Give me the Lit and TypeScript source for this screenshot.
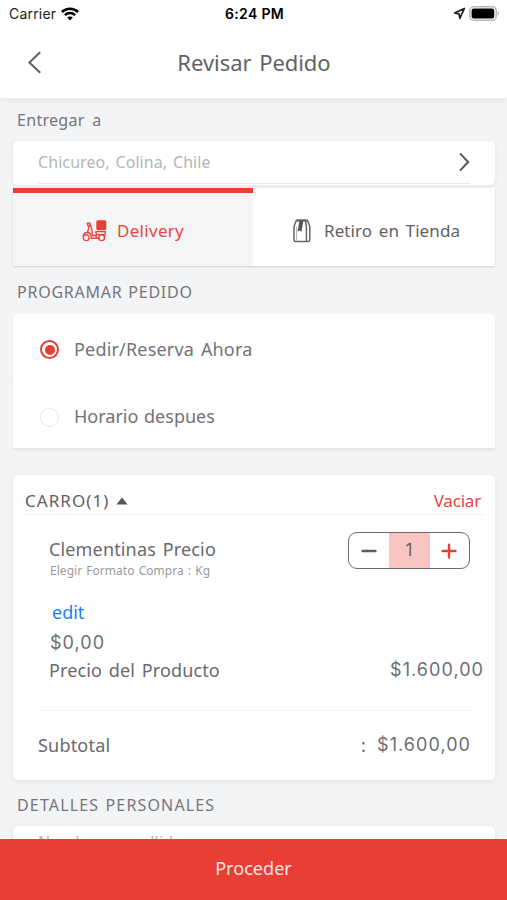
import { LitElement, html, css, svg } from "lit";
import { customElement, state, property } from "lit/decorators.js";
import { classMap } from "lit/directives/class-map.js";

const wifi = svg`<svg class="ico" width="18" height="14" viewBox="0 0 18 14" fill="none" stroke="#000" stroke-width="2.5">
  <path d="M.9 5C5.3.6 12.7.6 17.1 5"/><path d="M3.9 8.2c2.9-2.8 7.3-2.8 10.2 0"/>
  <path d="M6.2 10.6c1.6-1.5 4-1.5 5.6 0L9 13.5z" fill="#000" stroke="none"/></svg>`;

const locationArrow = svg`<svg class="ico" width="13" height="13" viewBox="0 0 13 13" fill="none" stroke="#222" stroke-width="1.7" stroke-linejoin="round">
  <path d="M11.4 1.4 1.6 6l4.4.8.8 4.6z"/></svg>`;

const battery = svg`<svg class="ico" width="31" height="15" viewBox="0 0 31 15">
  <rect x=".8" y=".8" width="26.4" height="13.4" rx="4" fill="#fff" stroke="#b9b9b9" stroke-width="1.6"/>
  <rect x="2.6" y="2.6" width="22.6" height="9.8" rx="2.2" fill="#000"/>
  <path d="M28.7 5.3c1.6.5 1.6 3.9 0 4.4z" fill="#b0b0b0"/></svg>`;

const scooter = svg`<svg class="ico" width="26" height="22" viewBox="0 0 26 22" fill="none" stroke="#e8463d" stroke-width="1.4" stroke-linejoin="round" stroke-linecap="round">
  <rect x="15" y="1" width="8.6" height="8.6" rx="1" fill="#e83e33" stroke="#e83e33"/>
  <path d="M5.2 3.3 7.9 3.1 8.3 5.2 6 5.8z"/>
  <path d="M7.2 6 5.4 12.6M8.8 5.5l1.4 6.2.2 3.8h3.2"/>
  <path d="M1.2 16.2c.4-2.5 2.2-3.8 4.3-3.7 2.3.1 3.5 1.7 3.6 4v1.8h8.3"/>
  <path d="M13.8 11.6h9.6v1.6c0 1-1 1.4-2 1.4h-5.7c-1.3 0-1.9-1-1.9-3zM14.2 14.6v3.6M22.4 14.6l.4 2.4"/>
  <circle cx="4.2" cy="17.7" r="2.9"/><circle cx="19.6" cy="17.7" r="2.9"/></svg>`;

const bag = svg`<svg class="ico" width="18" height="24" viewBox="0 0 18 24" fill="none" stroke="#66666a" stroke-width="1.5" stroke-linejoin="round">
  <path d="M3.4 1.2h11l2.4 6.3v13.6c0 .9-.6 1.5-1.5 1.5H2.5c-.9 0-1.5-.6-1.5-1.5V7.5z"/>
  <path d="M3.4 1.6h10.8" stroke-width="2"/>
  <path d="M12.4 2l1 5.4v15"/>
  <path d="M6.4 1.8h4L8.4 13 6.8 11.6 4.6 12.6z" fill="#55555a" stroke="none"/>
  <path d="M3.6 7.6v14.6" stroke="#b0b0b4" stroke-width="1"/></svg>`;

const shared = css`
  :host { display: block; }
  * { box-sizing: border-box; }
  .ico { display: block; flex: none; }
`;

@customElement("status-bar")
class StatusBar extends LitElement {
  static styles = [shared, css`
    .bar { display: grid; grid-template-columns: 1fr auto 1fr; align-items: center; height: 27px; padding: 0 7px 0 9px; font: 14px/20px Inter, sans-serif; color: #1c1c1c; }
    .left { display: flex; align-items: center; gap: 5px; letter-spacing: .2px; }
    .time { font-weight: 600; color: #000; letter-spacing: .35px; }
    .right { display: flex; align-items: center; justify-content: flex-end; gap: 3px; }
  `];
  render() {
    return html`<div class="bar">
      <div class="left"><span>Carrier</span>${wifi}</div>
      <div class="time">6:24 PM</div>
      <div class="right">${locationArrow}${battery}</div>
    </div>`;
  }
}

@customElement("quantity-stepper")
class QuantityStepper extends LitElement {
  @property({ type: Number }) value = 1;
  static styles = [shared, css`
    .box { display: grid; grid-template-columns: 1fr 41px 1fr; width: 122px; height: 37px; border: 1.5px solid #6b6b70; border-radius: 9px; overflow: hidden; background: #fff; }
    .cell { display: flex; align-items: center; justify-content: center; }
    .count { background: #f9c5c3; color: #66605f; font: 17px/22px Inter, sans-serif; padding-bottom: 2px; }
  `];
  render() {
    return html`<div class="box">
      <div class="cell"><svg class="ico" width="16" height="16" viewBox="0 0 16 16"><path d="M1.6 8h12.8" stroke="#5c5c62" stroke-width="2.4" stroke-linecap="round"/></svg></div>
      <div class="cell count">${this.value}</div>
      <div class="cell"><svg class="ico" width="16" height="16" viewBox="0 0 16 16"><path d="M1.6 8h12.8M8 1.6v12.8" stroke="#e83e33" stroke-width="2.4" stroke-linecap="round"/></svg></div>
    </div>`;
  }
}

@customElement("app-root")
class AppRoot extends LitElement {
  @state() mode = "delivery";
  @state() schedule = 0;

  static styles = [shared, css`
    .screen { height: 900px; display: flex; flex-direction: column; overflow: hidden; background: #f3f4f6; color: #69696f; font: 18px/24px "Noto Sans", sans-serif; white-space: nowrap; }
    .top { flex: none; height: 98px; background: #fff; box-shadow: 0 1px 8px rgba(0,0,0,.07); }
    .nav { display: grid; grid-template-columns: 1fr auto 1fr; align-items: center; height: 71px; }
    .back { margin-left: 27px; }
    .title { font-size: 22px; line-height: 30px; word-spacing: 2px; letter-spacing: -.05px; color: #626268; padding: 0 0 2px 1px; }
    .body { flex: 1; min-height: 0; overflow: hidden; padding: 0 12px 0 13px; }
    .label { display: flex; align-items: center; padding-left: 4px; font-size: 16px; color: #75757b; }
    .l1 { height: 43px; letter-spacing: .3px; word-spacing: 3px; }
    .l2 { height: 48px; padding-top: 4px; letter-spacing: .75px; word-spacing: 1px; }
    .l3 { height: 46px; padding-top: 4px; letter-spacing: 1.15px; word-spacing: 1px; }
    .card { background: #fff; border-radius: 5px; box-shadow: 0 1px 5px rgba(0,0,0,.08); }
    .address { height: 44px; padding: 0 25px; }
    .address-line { height: 43px; display: flex; align-items: center; justify-content: space-between; border-bottom: 1px solid #e9e9eb; font-size: 16px; letter-spacing: .08px; word-spacing: 1.5px; color: #b5b5b7; }
    .tabs { display: grid; grid-template-columns: 240px 1fr; height: 78px; margin-top: 3px; background: #fff; box-shadow: 0 1px 2px rgba(0,0,0,.15); }
    .tab { display: flex; align-items: center; font-size: 17px; color: #5f5f65; padding-top: 7px; border-top: 0 solid #e83e33; }
    .active { background: #f3f5f7; color: #e8453b; border-top-width: 5px; padding-top: 2px; }
    .t0 { padding-left: 69px; gap: 9px; letter-spacing: .3px; }
    .t1 { padding-left: 40px; gap: 13px; letter-spacing: .1px; word-spacing: 2px; }
    .options { height: 134px; border-radius: 5px 5px 0 0; box-shadow: 0 2px 3px rgba(0,0,0,.07); }
    .option { display: flex; align-items: center; gap: 15px; height: 67px; padding: 5px 0 0 27px; color: #727278; }
    .option:first-child { border-bottom: 1px solid #fafafa; }
    .option-text { padding-bottom: 2px; }
    .o0 { letter-spacing: .18px; word-spacing: 2px; }
    .o1 { word-spacing: 1px; }
    .radio { width: 19px; height: 19px; border: 1.5px solid #e6e6e6; border-radius: 50%; display: flex; align-items: center; justify-content: center; }
    .radio.on { border: 2px solid #e83e33; }
    .on::after { content: ""; width: 10px; height: 10px; flex: none; border-radius: 50%; background: #e83e33; }
    .cart { height: 305px; margin-top: 27px; }
    .cart-head { display: flex; align-items: center; height: 40px; margin: 0 12px 0 13px; padding: 12px 1px 0 0; border-bottom: 1.5px solid #f1f1f2; font-size: 17px; }
    .cart-title { letter-spacing: 1.05px; color: #5f5f65; margin-left: -1px; }
    .caret { margin-left: 7px; }
    .clear { margin-left: auto; margin-right: 1px; color: #e8453b; letter-spacing: -.2px; }
    .item { display: flex; justify-content: space-between; align-items: flex-start; padding: 17px 25px 0 36px; height: 71px; }
    .name { line-height: 34px; height: 31px; letter-spacing: .15px; word-spacing: 2px; }
    .variant { font-size: 12px; line-height: 15px; letter-spacing: .03px; word-spacing: 1px; color: #98989d; padding-left: 1px; }
    .edit { padding-left: 39px; height: 31px; line-height: 30px; margin-top: 11px; color: #1b80f3; font-size: 18px; }
    .extra { padding-left: 37px; height: 28px; line-height: 30px; }
    .price { display: flex; justify-content: space-between; padding: 0 11px 0 36px; height: 28px; line-height: 28px; }
    .price-label { letter-spacing: .12px; word-spacing: 2px; }
    .amount { font-family: Inter, sans-serif; letter-spacing: 1.05px; color: #6e6e74; }
    .subtotal { display: flex; align-items: center; height: 68px; margin: 26px 24px 0 25px; padding-top: 1px; border-top: 1.5px solid #f2f2f3; letter-spacing: .2px; }
    .colon { margin-left: auto; margin-right: 11px; }
    .details { height: 100px; padding: 4px 25px; font-size: 16px; line-height: 24px; letter-spacing: .17px; word-spacing: 2px; color: #b3b3b5; }
    .proceed { flex: none; height: 61px; display: flex; align-items: center; justify-content: center; padding-bottom: 3px; background: #e83e33; color: #fde3e0; letter-spacing: .05px; position: relative; }
  `];

  render() {
    const tab = (id: string, i: number, icon: unknown, text: string) => html`
      <div class=${classMap({ tab: true, ["t" + i]: true, active: this.mode === id })} @click=${() => (this.mode = id)}>${icon}<span>${text}</span></div>`;
    return html`<div class="screen">
      <div class="top">
        <status-bar></status-bar>
        <div class="nav">
          <svg class="ico back" width="16" height="24" viewBox="0 0 16 24" fill="none" stroke="#5f5f65" stroke-width="2"><path d="M13.2 1.2 2.4 11.5l10.8 10.3"/></svg>
          <div class="title">Revisar Pedido</div>
        </div>
      </div>
      <div class="body">
        <div class="label l1">Entregar a</div>
        <div class="card address"><div class="address-line">
          <span>Chicureo, Colina, Chile</span>
          <svg class="ico" width="12" height="20" viewBox="0 0 12 20" fill="none" stroke="#55555a" stroke-width="2"><path d="M2 1.4 10.2 10 2 18.6"/></svg>
        </div></div>
        <div class="tabs">${tab("delivery", 0, scooter, "Delivery")}${tab("pickup", 1, bag, "Retiro en Tienda")}</div>
        <div class="label l2">PROGRAMAR PEDIDO</div>
        <div class="card options">
          ${["Pedir/Reserva Ahora", "Horario despues"].map((text, i) => html`
            <div class="option o${i}" @click=${() => (this.schedule = i)}>
              <span class=${classMap({ radio: true, on: this.schedule === i })}></span><span class="option-text">${text}</span>
            </div>`)}
        </div>
        <div class="card cart">
          <div class="cart-head">
            <span class="cart-title">CARRO(1)</span>
            <svg class="ico caret" width="12" height="8" viewBox="0 0 12 8"><path d="M6 .5 11.6 7.5H.4z" fill="#55555a"/></svg>
            <span class="clear">Vaciar</span>
          </div>
          <div class="item">
            <div><div class="name">Clementinas Precio</div><div class="variant">Elegir Formato Compra : Kg</div></div>
            <quantity-stepper .value=${1}></quantity-stepper>
          </div>
          <div class="edit">edit</div>
          <div class="extra amount">$0,00</div>
          <div class="price"><span class="price-label">Precio del Producto</span><span class="amount">$1.600,00</span></div>
          <div class="subtotal"><span>Subtotal</span><span class="colon">:</span><span class="amount">$1.600,00</span></div>
        </div>
        <div class="label l3">DETALLES PERSONALES</div>
        <div class="card details">Nombre y apellido</div>
      </div>
      <div class="proceed">Proceder</div>
    </div>`;
  }
}
